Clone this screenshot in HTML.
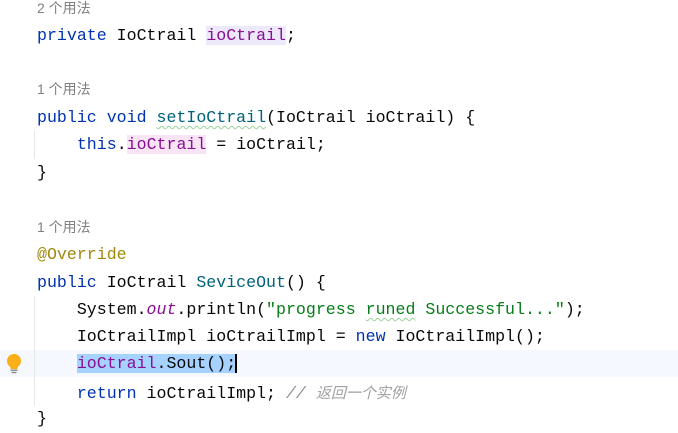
<!DOCTYPE html>
<html><head><meta charset="utf-8"><style>
body{margin:0;width:678px;height:427px;background:#fff;overflow:hidden;position:relative;font-family:"Liberation Mono",monospace;font-size:16.6px;color:#080808}
.l{position:absolute;left:37px;height:28px;line-height:28px;white-space:pre}
.u{font-family:"Liberation Sans","Noto Sans CJK SC",sans-serif;font-size:14px;color:#808080}
.k{color:#0033b3}.f{color:#00627a}.p{color:#871094}.s{color:#067d17}.c{color:#8c8c8c;font-style:italic}.a{color:#9e880d}
.cj{font-family:"Noto Sans CJK SC",sans-serif;font-size:15px;color:#a0a0a0}
.hl1{background:#ede9fb}.hl2{background:#f8e4f4}.sel{background:#a6d2ff}
.w{text-decoration:underline wavy #9ad29a;text-decoration-thickness:1px;text-underline-offset:3px}
.g{position:absolute;left:34px;width:1px;background:#e8e8e8}
</style></head><body>
<div style="position:absolute;left:0;top:350px;width:678px;height:27px;background:#f5f8fe"></div>
<div class="g" style="top:131px;height:28px"></div>
<div class="g" style="top:296px;height:110px"></div>
<div class="l u" style="top:-6px">2 个用法</div>
<div class="l" style="top:22px"><span class="k">private</span> IoCtrail <span class="p hl1">ioCtrail</span>;</div>
<div class="l u" style="top:75px">1 个用法</div>
<div class="l" style="top:104px"><span class="k">public void</span> <span class="f w">setIoCtrail</span>(IoCtrail ioCtrail) {</div>
<div class="l" style="top:131px">    <span class="k">this</span>.<span class="p hl2">ioCtrail</span> = ioCtrail;</div>
<div class="l" style="top:159px">}</div>
<div class="l u" style="top:213px">1 个用法</div>
<div class="l a" style="top:241px">@Override</div>
<div class="l" style="top:269px"><span class="k">public</span> IoCtrail <span class="f">SeviceOut</span>() {</div>
<div class="l" style="top:296px">    System.<span class="p" style="font-style:italic">out</span>.println(<span class="s">"progress <span class="w">runed</span> Successful..."</span>);</div>
<div class="l" style="top:323px">    IoCtrailImpl ioCtrailImpl = <span class="k">new</span> IoCtrailImpl();</div>
<div class="l" style="top:350px;height:27px;line-height:28px">    <span class="sel"><span class="p">ioCtrail</span>.Sout();</span><span style="border-left:2px solid #000;margin-left:-1px"></span></div>
<div class="l" style="top:379px">    <span class="k">return</span> ioCtrailImpl; <span class="c">// <span class="cj">返回一个实例</span></span></div>
<div class="l" style="top:405px">}</div>
<svg style="position:absolute;left:5px;top:353px" width="18" height="22" viewBox="0 0 18 22"><circle cx="9" cy="8" r="7" fill="#fbb019"/><rect x="5.5" y="12" width="7" height="4" fill="#fbb019"/><rect x="5.5" y="16.5" width="7" height="1.4" fill="#888"/><rect x="6.5" y="18.8" width="5" height="1.4" fill="#888"/></svg>
</body></html>
